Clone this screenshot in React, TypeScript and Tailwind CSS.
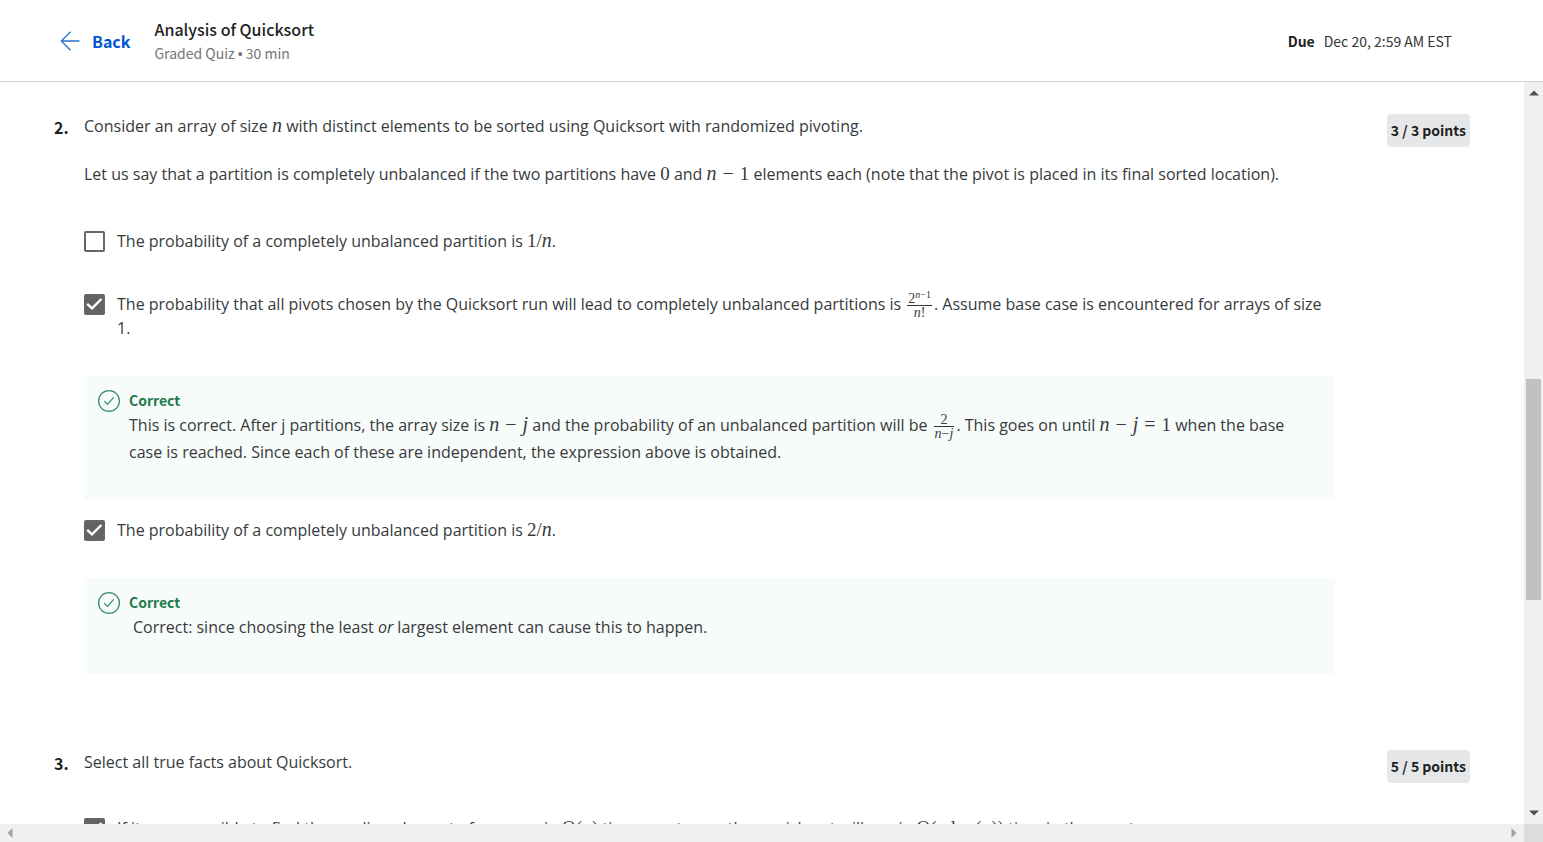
import { useState, type ReactNode } from "react";

function Var({ children }: { children: ReactNode }) {
  return <i className="font-['Liberation_Serif',serif] text-[20px] leading-none">{children}</i>;
}

function Num({ children }: { children: ReactNode }) {
  return <span className="font-['Liberation_Serif',serif] text-[19px] leading-none">{children}</span>;
}

function Op({ children }: { children: ReactNode }) {
  return <span className="mx-[6px] font-['Liberation_Serif',serif] text-[20px] leading-none">{children}</span>;
}

function Fraction({ top, bottom }: { top: ReactNode; bottom: ReactNode }) {
  return (
    <span className="-my-1 mx-[2px] inline-flex flex-col items-center align-middle font-['Liberation_Serif',serif] text-[14px] leading-[13px]">
      <span className="w-full border-b border-[#333] px-px text-center">{top}</span>
      <span className="px-px">{bottom}</span>
    </span>
  );
}

function Answer({ id, checked, children }: { id: string; checked?: boolean; children: ReactNode }) {
  const [on, setOn] = useState(Boolean(checked));
  return (
    <div className="flex items-start gap-3">
      <span className="relative mt-[2px] size-[21px] shrink-0">
        <input
          id={id}
          type="checkbox"
          checked={on}
          onChange={() => setOn(!on)}
          className="block size-full appearance-none rounded-xs border-2 border-[#666] bg-white checked:bg-[#636363]"
        />
        {on && (
          <svg viewBox="0 0 21 21" className="pointer-events-none absolute inset-0" fill="none" aria-hidden="true">
            <path d="M3.2 9.8 8 14.4 17.4 5" stroke="#fff" strokeWidth="2.4" />
          </svg>
        )}
      </span>
      <label htmlFor={id} className="min-w-0 flex-1">{children}</label>
    </div>
  );
}

function Feedback({ children }: { children: ReactNode }) {
  return (
    <div className="flex gap-2 bg-[#f7fbf9] pt-3 pr-4 pb-[33px] pl-[13px]">
      <svg viewBox="0 0 24 24" className="mt-px size-6 shrink-0" fill="none" stroke="#3a9168" aria-hidden="true">
        <circle cx="12" cy="12" r="10.4" strokeWidth="1.3" />
        <path d="m7.3 12.2 3.2 3.2 6.2-7" strokeWidth="1.3" />
      </svg>
      <div className="min-w-0 flex-1">
        <h3 className="font-['Noto_Sans_CJK_SC',sans-serif] text-[14px] leading-6 font-bold text-[#1f7a4d]">Correct</h3>
        {children}
      </div>
    </div>
  );
}

function Question({ num, points, children }: { num: number; points: string; children: ReactNode }) {
  return (
    <section className="flex items-start">
      <h2 className="mt-px w-[30px] shrink-0 font-['Noto_Sans_CJK_SC',sans-serif] text-[16px] leading-6 font-bold text-[#1f1f1f]">
        {num}.
      </h2>
      <div className="min-w-0 flex-1">{children}</div>
      <div className="ml-[52px] rounded-sm bg-[#e5e7e8] px-1 font-['Noto_Sans_CJK_SC',sans-serif] text-[14px] leading-[33px] font-bold whitespace-nowrap text-[#1f1f1f]">
        {points}
      </div>
    </section>
  );
}

function Arrow({ d, fill }: { d: string; fill: string }) {
  return (
    <svg viewBox="0 0 10 10" className="size-[10px]" aria-hidden="true">
      <path d={d} fill={fill} />
    </svg>
  );
}

export default function App() {
  return (
    <div className="flex h-screen flex-col overflow-hidden bg-white font-['Open_Sans',sans-serif] text-[16px] leading-6 text-[#373a3c]">
      <header className="flex h-[82px] shrink-0 items-center border-b border-[#d0d3d6] pt-px pr-[91px] pl-[60px] font-['Noto_Sans_CJK_SC',sans-serif]">
        <a href="#back" className="flex items-center gap-3 text-[16px] font-bold text-[#0056d2]">
          <svg viewBox="0 0 20 20" className="size-5" fill="none" stroke="#2a73cc" strokeWidth="1.3" aria-hidden="true">
            <path d="M19.5 10H1.3M10.5.8 1.3 10l9.2 9.2" />
          </svg>
          Back
        </a>
        <div className="ml-6 min-w-0 flex-1">
          <h1 className="text-[16px] leading-6 font-medium text-[#1f1f1f]">Analysis of Quicksort</h1>
          <p className="text-[14px] leading-6 text-[#757575]">
            Graded Quiz <span className="font-['Liberation_Sans',sans-serif]">•</span> 30 min
          </p>
        </div>
        <p className="flex gap-[9px] text-[14px] text-[#333]">
          <b className="font-bold text-[#1f1f1f]">Due</b>
          <span>Dec 20, 2:59 AM EST</span>
        </p>
      </header>

      <div className="flex min-h-0 flex-1">
        <main className="min-w-0 flex-1 overflow-hidden pt-8 pr-[54px] pl-[54px]">
          <Question num={2} points="3 / 3 points">
            <p>
              Consider an array of size <Var>n</Var> with distinct elements to be sorted using Quicksort with
              randomized pivoting.
            </p>
            <p className="mt-6">
              Let us say that a partition is completely unbalanced if the two partitions have <Num>0</Num> and{" "}
              <Var>n</Var><Op>−</Op><Num>1</Num> elements each (note that the pivot is placed in its final sorted
              location).
            </p>
            <div className="mt-[43px]">
              <Answer id="q2a">
                The probability of a completely unbalanced partition is <Num>1/</Num><Var>n</Var>.
              </Answer>
            </div>
            <div className="mt-[39px]">
              <Answer id="q2b" checked>
                The probability that all pivots chosen by the Quicksort run will lead to completely unbalanced
                partitions is{" "}
                <Fraction
                  top={<>2<sup className="text-[10px] leading-none"><i>n</i>−1</sup></>}
                  bottom={<><i>n</i>!</>}
                />
                . Assume base case is encountered for arrays of size 1.
              </Answer>
            </div>
            <div className="mt-9">
              <Feedback>
                <p className="leading-[27px]">
                  This is correct. After j partitions, the array size is <Var>n</Var><Op>−</Op><Var>j</Var> and the
                  probability of an unbalanced partition will be{" "}
                  <Fraction top="2" bottom={<><i>n</i>−<i>j</i></>} />. This goes on until <Var>n</Var><Op>−</Op>
                  <Var>j</Var><Op>=</Op><Num>1</Num> when the base case is reached. Since each of these are
                  independent, the expression above is obtained.
                </p>
              </Feedback>
            </div>
            <div className="mt-[19px]">
              <Answer id="q2c" checked>
                The probability of a completely unbalanced partition is <Num>2/</Num><Var>n</Var>.
              </Answer>
            </div>
            <div className="mt-9">
              <Feedback>
                <p className="pl-1 leading-[27px]">
                  Correct: since choosing the least <em>or</em> largest element can cause this to happen.
                </p>
              </Feedback>
            </div>
          </Question>

          <div className="mt-[76px]">
            <Question num={3} points="5 / 5 points">
              <p>Select all true facts about Quicksort.</p>
              <div className="mt-[42px]">
                <Answer id="q3a" checked>
                  If it were possible to find the median element of an array in <Num>Θ(</Num><Var>n</Var>
                  <Num>)</Num> time worst case, then quicksort will run in <Num>Θ(</Num><Var>n</Var>{" "}
                  <Num>log(</Num><Var>n</Var><Num>))</Num> time in the worst case.
                </Answer>
              </div>
            </Question>
          </div>
        </main>

        <div className="flex w-[19px] shrink-0 flex-col items-center bg-[#f0f0f0] py-[6px]">
          <Arrow d="M0 7.5 5 2.5 10 7.5Z" fill="#505050" />
          <div className="flex w-[15px] flex-1 flex-col">
            <div className="grow-[281]" />
            <div className="grow-[221] bg-[#c1c1c1]" />
            <div className="grow-[208]" />
          </div>
          <Arrow d="M0 2.5 5 7.5 10 2.5Z" fill="#505050" />
        </div>
      </div>

      <div className="flex h-[18px] shrink-0 bg-[#f0f0f0]">
        <div className="flex flex-1 items-center justify-between px-[5px]">
          <Arrow d="M7.5 0 2.5 5 7.5 10Z" fill="#a3a3a3" />
          <Arrow d="M2.5 0 7.5 5 2.5 10Z" fill="#a3a3a3" />
        </div>
        <div className="w-[19px] bg-[#dcdcdc]" />
      </div>
    </div>
  );
}
